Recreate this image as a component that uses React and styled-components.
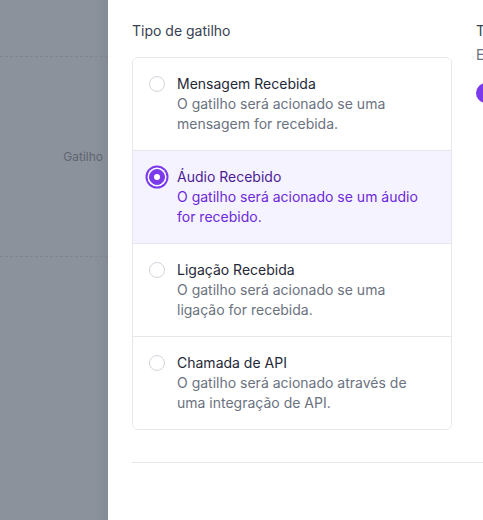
import React from "react";
import styled, { createGlobalStyle } from "styled-components";

const GlobalStyle = createGlobalStyle`
  html, body {
    margin: 0;
    padding: 0;
    height: 100%;
  }
  body {
    font-family: Inter, "Noto Sans", sans-serif;
    -webkit-font-smoothing: antialiased;
  }
  #root {
    height: 100%;
  }
`;

const options = [
  {
    id: "message",
    title: "Mensagem Recebida",
    description: "O gatilho será acionado se uma mensagem for recebida.",
  },
  {
    id: "audio",
    title: "Áudio Recebido",
    description: "O gatilho será acionado se um áudio for recebido.",
  },
  {
    id: "call",
    title: "Ligação Recebida",
    description: "O gatilho será acionado se uma ligação for recebida.",
  },
  {
    id: "api",
    title: "Chamada de API",
    description: "O gatilho será acionado através de uma integração de API.",
  },
];

const App = () => {
  const selected = "audio";

  return (
    <Wrapper>
      <GlobalStyle />
      <Backdrop>
        <DashedRule />
        <BackdropLabel>Gatilho</BackdropLabel>
        <DashedRule />
      </Backdrop>
      <Panel>
        <Columns>
          <Field>
            <Label>Tipo de gatilho</Label>
            <OptionList>
              {options.map((opt) => (
                <Option key={opt.id} $active={opt.id === selected}>
                  <Radio $active={opt.id === selected} />
                  <OptionText>
                    <OptionTitle $active={opt.id === selected}>
                      {opt.title}
                    </OptionTitle>
                    <OptionDesc $active={opt.id === selected}>
                      {opt.description}
                    </OptionDesc>
                  </OptionText>
                </Option>
              ))}
            </OptionList>
          </Field>
          <SideField>
            <Label>Transcrição</Label>
            <SideHint>Escolha como o áudio será lido</SideHint>
            <SideToggle />
          </SideField>
        </Columns>
        <Divider />
      </Panel>
    </Wrapper>
  );
};

const Wrapper = styled.div`
  display: flex;
  height: 520px;
  width: 483px;
  overflow: hidden;
`;

const Backdrop = styled.div`
  width: 108px;
  flex-shrink: 0;
  background: linear-gradient(
    to right,
    #8b929c 0%,
    #8b929c 87%,
    #858b95 100%
  );
  display: flex;
  flex-direction: column;
  padding-top: 56px;
  box-sizing: border-box;
`;

const DashedRule = styled.div`
  border-top: 1px dashed #7e8590;
  height: 0;
`;

const BackdropLabel = styled.div`
  height: 199px;
  display: flex;
  align-items: center;
  justify-content: flex-end;
  padding-right: 5px;
  font-size: 12px;
  color: #5f6670;
`;

const Panel = styled.div`
  flex: 1;
  background: #fff;
  padding: 21px 0 0 24px;
  box-sizing: border-box;
  overflow: hidden;
`;

const Columns = styled.div`
  display: grid;
  grid-template-columns: 320px 200px;
  column-gap: 24px;
`;

const Field = styled.div`
  display: flex;
  flex-direction: column;
`;

const Label = styled.div`
  font-size: 14px;
  line-height: 20px;
  color: #374151;
  margin-bottom: 16px;
  white-space: nowrap;
`;

const OptionList = styled.div`
  border: 1px solid #e5e7eb;
  border-radius: 6px;
  overflow: hidden;
`;

const Option = styled.div`
  display: flex;
  gap: 12px;
  padding: 16px;
  background: ${(p) => (p.$active ? "#f5f3ff" : "#fff")};
  & + & {
    border-top: 1px solid #e5e7eb;
  }
`;

const Radio = styled.span`
  position: relative;
  width: 16px;
  height: 16px;
  margin-top: 2px;
  flex-shrink: 0;
  border-radius: 50%;
  box-sizing: border-box;
  border: 1px solid ${(p) => (p.$active ? "#7c3aed" : "#d1d5db")};
  background: ${(p) => (p.$active ? "#7c3aed" : "#fff")};
  box-shadow: ${(p) =>
    p.$active ? "0 0 0 1.5px #fff, 0 0 0 3.5px #7c3aed" : "none"};

  &::after {
    content: "";
    display: ${(p) => (p.$active ? "block" : "none")};
    position: absolute;
    width: 6px;
    height: 6px;
    top: 4px;
    left: 4px;
    border-radius: 50%;
    background: #fff;
  }
`;

const OptionText = styled.div`
  display: flex;
  flex-direction: column;
  font-size: 14px;
  line-height: 20px;
`;

const OptionTitle = styled.div`
  color: ${(p) => (p.$active ? "#4c1d95" : "#1f2937")};
`;

const OptionDesc = styled.div`
  color: ${(p) => (p.$active ? "#6d28d9" : "#6b7280")};
`;

const SideField = styled.div`
  display: flex;
  flex-direction: column;
`;

const SideHint = styled.div`
  font-size: 14px;
  line-height: 20px;
  color: #6b7280;
  margin-top: -12px;
  white-space: nowrap;
`;

const SideToggle = styled.span`
  margin-top: 18px;
  width: 36px;
  height: 20px;
  border-radius: 10px;
  background: #7c3aed;
`;

const Divider = styled.div`
  margin-top: 32px;
  border-top: 1px solid #e5e7eb;
`;

export default App;
